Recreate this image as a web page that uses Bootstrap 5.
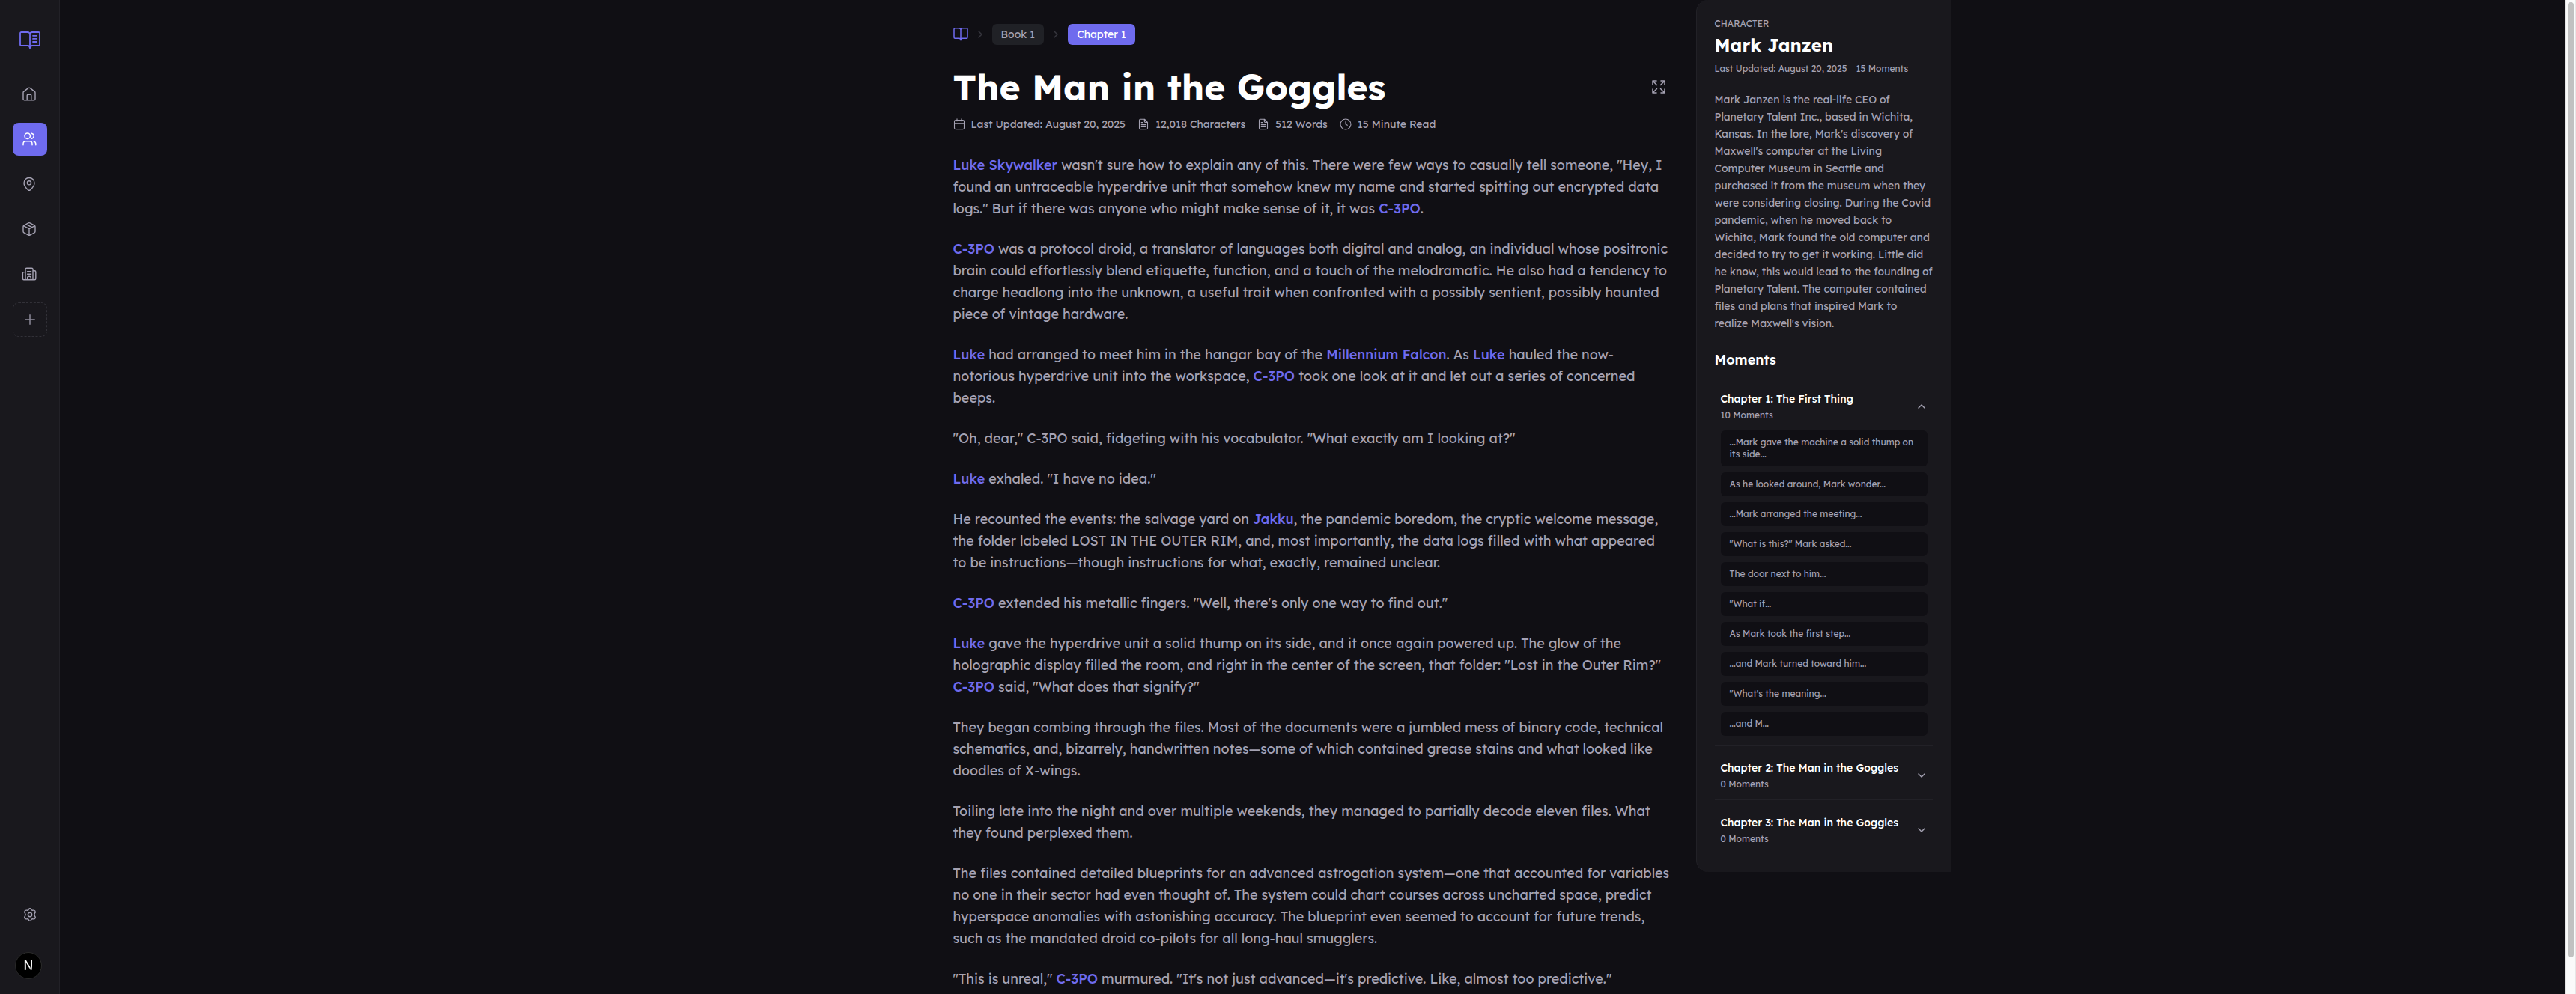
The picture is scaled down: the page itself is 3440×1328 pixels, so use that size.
<!DOCTYPE html>
<html lang="en" data-bs-theme="dark">
<head>
<meta charset="utf-8">
<meta name="viewport" content="width=device-width, initial-scale=1">
<title>The Man in the Goggles</title>
<link href="https://cdn.jsdelivr.net/npm/bootstrap@5.3.0/dist/css/bootstrap.min.css" rel="stylesheet">
<style>
:root{--page:#100f14;--panel:#19181d;--line:#222127;--soft:#a5a2b3;--brand:#6f6bee}
body{background:var(--page);color:var(--soft);font-family:Lexend,Inter,sans-serif;font-size:14px;line-height:20px}
svg{display:block;flex:none;fill:none;stroke:currentColor;stroke-linecap:round;stroke-linejoin:round}
h1,h2,h3{color:#fff}
.side{width:80px;background:var(--panel);border-right:1px solid var(--line);padding:40px 0 84px}
.side .brand-link{color:var(--brand);padding:2px 0 38px}
.side .btn{width:46px;height:44px;padding:0;color:var(--soft);border:0;border-radius:8px;--bs-btn-hover-bg:#24232a}
.side .btn.current{background:var(--brand);color:#fff}
.side .btn.adder{height:46px;border:1px dashed #323138;color:#8d8b9a}
.story-col{flex:0 1 1024px;min-width:0;padding:32px}
.wing{flex:1 1 0;min-width:0}
.crumbs .home-crumb{color:var(--brand)}
.crumbs svg.sep{color:#36353d}
.crumbs .pill{padding:4px 12px;border-radius:6px;background:#202126;color:var(--soft);text-decoration:none}
.crumbs .pill.current{background:var(--brand);color:#fff}
.story-title{font-size:48px;line-height:48px;font-weight:700}
.expand{width:36px;height:36px;padding:0;border:0;color:var(--soft)}
.story{margin-top:30px;font-size:18px;line-height:29px}
.story p{margin-bottom:25px}
.story a{color:var(--brand);font-weight:500;text-decoration:none}
.info{width:341px;background:var(--panel);border-left:1px solid var(--line);border-radius:16px 0 0 16px;padding:24px}
.tiny{font-size:12px;line-height:16px}
.stats{gap:12px}
.info h2{font-size:24px;line-height:32px;font-weight:700}
.bio{margin-top:22px;line-height:23px}
.info h3{font-size:18px;line-height:28px;font-weight:600;margin-top:23px}
.chap{padding:12px 0}
.chap+.chap{border-top:1px solid var(--line)}
.chap-toggle{border:0;background:none;padding:8px 8px 0;color:var(--soft);text-align:left}
.chap-toggle .name{color:#fff;font-weight:500}
.chap-toggle svg{transform:rotate(180deg)}
.chap-toggle.collapsed svg{transform:none}
.quote{background:var(--page);border-radius:6px;padding:8px 12px;color:var(--soft);text-decoration:none}
.track{width:15px;background:#fafafa;border:solid #e6e6e6;border-width:0 1px;padding:3px}
.thumb{width:8px;height:96.5%;border-radius:4px;background:#c1c1c1}
.dev{left:20px;bottom:20px;width:36px;height:36px;border:1px solid #2b2b2b;background:#000;padding:0}
.dev span{font:500 17px/34px Inter,sans-serif;background:linear-gradient(160deg,#fff 60%,#444 85%);-webkit-background-clip:text;background-clip:text;color:transparent}
</style>
</head>
<body>
<div class="d-flex vh-100 overflow-hidden">
  <nav class="side d-flex flex-column align-items-center flex-shrink-0" aria-label="Main">
    <a href="#" class="brand-link" aria-label="Library"><svg width="28" height="24" viewBox="0 0 28 24" stroke-width="1.8"><path d="M14 4c0-1.800-1.200-3-3-3H2.600C1.600 1 1 1.600 1 2.600v14.800c0 1 .6 1.600 1.600 1.600H11c1.700 0 3 1.200 3 3.500 0-2.300 1.300-3.500 3-3.500h8.400c1 0 1.600-.6 1.600-1.600V2.600c0-1-.6-1.600-1.600-1.600H17c-1.800 0-3 1.200-3 3v18M18 5.800h5M18 9.900h5M18 14h5"/></svg></a>
    <div class="d-flex flex-column gap-3">
      <button class="btn d-flex align-items-center justify-content-center" aria-label="Home"><svg width="20" height="20" viewBox="0 0 20 20" stroke-width="1.400"><path d="M1 7.800c0-.6.3-1.100.7-1.400l6-4.800c.8-.6 1.800-.6 2.600 0l6 4.800c.4.3.7.8.7 1.400v8.400c0 .9-.7 1.600-1.600 1.600H2.600c-.9 0-1.600-.7-1.600-1.600zM6.200 17.800v-6.200c0-.8.5-1.300 1.300-1.300h3c.8 0 1.300.5 1.300 1.300v6.200"/></svg></button>
      <button class="btn current d-flex align-items-center justify-content-center" aria-label="Characters"><svg width="20" height="20" viewBox="0 0 20 20" stroke-width="1.500"><circle cx="6.700" cy="5.700" r="3.700"/><path d="M12.300 2.200c1.800.5 3 1.800 3 3.500s-1.200 3-3 3.600M1 17.700v-1.500c0-2 1.500-3.500 3.500-3.500h5c2 0 3.500 1.500 3.500 3.500v1.500M15 12.900c1.700.5 2.800 1.700 2.800 3.300v1.500"/></svg></button>
      <button class="btn d-flex align-items-center justify-content-center" aria-label="Locations"><svg width="20" height="20" viewBox="0 0 20 20" stroke-width="1.400"><path d="M9 1.500c-4 0-7 3-7 7 0 3.800 3 7 5.700 9.400.8.600 1.800.6 2.600 0C13 15.500 16 12.300 16 8.500c0-4-3-7-7-7z"/><circle cx="9" cy="8.300" r="2.600"/></svg></button>
      <button class="btn d-flex align-items-center justify-content-center" aria-label="Items"><svg width="20" height="20" viewBox="0 0 20 20" stroke-width="1.400"><path d="M8 1.900c.7-.4 1.300-.4 2 0l6 3.200c.6.4 1 .9 1 1.600v6.600c0 .7-.4 1.200-1 1.600l-6 3.200c-.7.400-1.300.4-2 0l-6-3.200c-.6-.4-1-.9-1-1.600V6.700c0-.7.400-1.200 1-1.600zM1.400 5.700 9 9.700l7.600-4M9 9.700v8.700M4.900 3.700l7.900 4"/></svg></button>
      <button class="btn d-flex align-items-center justify-content-center" aria-label="Organizations"><svg width="20" height="20" viewBox="0 0 20 20" stroke-width="1.400"><path d="M4 17.800V4c0-1 .7-1.700 1.700-1.700h6.600c1 0 1.700.7 1.700 1.700v13.800M4 7.600H1.900C1 7.600.4 8.200.4 9.100v7.200c0 .9.6 1.500 1.500 1.500h14.400c.9 0 1.500-.6 1.500-1.500V7.200c0-.9-.6-1.500-1.500-1.500H14M6.600 6.700h5M6.600 10.200h5M6.600 17.800v-2.500c0-1.300 1-2.100 2.400-2.100s2.400.8 2.400 2.100v2.500"/></svg></button>
      <button class="btn adder d-flex align-items-center justify-content-center" aria-label="Add"><svg width="14" height="14" viewBox="0 0 14 14" stroke-width="1.500"><path d="M7 .8v12.400M.8 7h12.400"/></svg></button>
    </div>
    <button class="btn d-flex align-items-center justify-content-center mt-auto" aria-label="Settings"><svg width="20" height="20" viewBox="0 0 24 24" stroke-width="1.700"><path d="M10.300 3.200c.8-1.600 2.600-1.600 3.400 0 .5 1.300 1.700 2 3.100 1.800 1.800-.3 3 .2 3.600 1.300.7 1.200.5 2.400-.7 3.700-.9 1.200-.9 2.800 0 4 1.200 1.300 1.400 2.500.7 3.700-.6 1.100-1.800 1.600-3.600 1.300-1.400-.2-2.600.5-3.100 1.800-.8 1.600-2.600 1.600-3.400 0-.5-1.300-1.700-2-3.100-1.800-1.800.3-3-.2-3.600-1.300-.7-1.200-.5-2.400.7-3.700.9-1.200.9-2.800 0-4C3.100 8.700 2.900 7.500 3.600 6.300 4.200 5.200 5.400 4.700 7.200 5c1.400.2 2.600-.5 3.100-1.800z"/><circle cx="12" cy="12" r="3.200"/></svg></button>
  </nav>

  <main class="d-flex flex-grow-1 overflow-hidden align-items-start">
    <div class="wing"></div>
    <article class="story-col">
      <nav class="crumbs d-flex align-items-center gap-2" aria-label="Breadcrumb">
        <a href="#" class="home-crumb" aria-label="Books"><svg width="20" height="20" viewBox="0 0 20 20" stroke-width="1.500"><path d="M10 4c0-1.400-1-2.200-2.300-2.200H2.200C1.400 1.800 1 2.200 1 3v11c0 .8.400 1.200 1.200 1.200h5.500c1.300 0 2.300 1 2.300 2.600 0-1.600 1-2.600 2.300-2.600h5.500c.8 0 1.200-.4 1.200-1.200V3c0-.8-.4-1.200-1.200-1.200h-5.500C11 1.800 10 2.600 10 4v13.500"/></svg></a>
        <svg class="sep" width="16" height="16" viewBox="0 0 16 16" stroke-width="1.500"><path d="m6 4 4 4-4 4"/></svg>
        <a href="#" class="pill">Book 1</a>
        <svg class="sep" width="16" height="16" viewBox="0 0 16 16" stroke-width="1.500"><path d="m6 4 4 4-4 4"/></svg>
        <a href="#" class="pill current" aria-current="page">Chapter 1</a>
      </nav>
      <header class="d-flex justify-content-between align-items-center mt-4 pt-2 mb-3">
        <h1 class="story-title mb-0">The Man in the Goggles</h1>
        <button class="btn expand d-flex align-items-center justify-content-center" aria-label="Full screen"><svg width="20" height="20" viewBox="0 0 20 20" stroke-width="1.500"><path d="M2 7V2h5M2 2l5.500 5.500M13 2h5v5M18 2l-5.500 5.500M2 13v5h5M2 18l5.500-5.500M18 13v5h-5M18 18l-5.500-5.500"/></svg></button>
      </header>
      <div class="d-flex flex-wrap gap-3">
        <span class="d-flex align-items-center gap-2"><svg width="16" height="16" viewBox="0 0 16 16" stroke-width="1.100"><path d="M3.200 2.500h9.600c1 0 1.700.7 1.700 1.700v8.900c0 1-.7 1.700-1.700 1.700H3.200c-1 0-1.700-.7-1.700-1.700V4.200c0-1 .7-1.700 1.700-1.700zM1.500 6.700h13M5 .8v3M11 .8v3"/></svg>Last Updated: August 20, 2025</span>
        <span class="d-flex align-items-center gap-2"><svg width="16" height="16" viewBox="0 0 16 16" stroke-width="1.100"><path d="M9.500 1.200H4c-.9 0-1.500.6-1.500 1.500v10.600c0 .9.600 1.500 1.500 1.500h8c.9 0 1.500-.6 1.500-1.500v-8zM9.300 1.200v3c0 .8.400 1.200 1.200 1.200h3M5.200 5.600h1.600M5.200 8.600h5.600M5.200 11.500h5.600"/></svg>12,018 Characters</span>
        <span class="d-flex align-items-center gap-2"><svg width="16" height="16" viewBox="0 0 16 16" stroke-width="1.100"><path d="M9.500 1.200H4c-.9 0-1.500.6-1.500 1.500v10.600c0 .9.600 1.500 1.500 1.500h8c.9 0 1.500-.6 1.500-1.500v-8zM9.300 1.200v3c0 .8.400 1.200 1.200 1.200h3M5.200 5.600h1.600M5.200 8.600h5.600M5.200 11.500h5.600"/></svg>512 Words</span>
        <span class="d-flex align-items-center gap-2"><svg width="16" height="16" viewBox="0 0 16 16" stroke-width="1.100"><circle cx="8" cy="8" r="7"/><path d="M8 4.500V8l2.300 1.300"/></svg>15 Minute Read</span>
      </div>
      <div class="story">
        <p><a href="#">Luke Skywalker</a> wasn't sure how to explain any of this. There were few ways to casually tell someone, "Hey, I found an untraceable hyperdrive unit that somehow knew my name and started spitting out encrypted data logs." But if there was anyone who might make sense of it, it was <a href="#">C-3PO</a>.</p>
        <p><a href="#">C-3PO</a> was a protocol droid, a translator of languages both digital and analog, an individual whose positronic brain could effortlessly blend etiquette, function, and a touch of the melodramatic. He also had a tendency to charge headlong into the unknown, a useful trait when confronted with a possibly sentient, possibly haunted piece of vintage hardware.</p>
        <p><a href="#">Luke</a> had arranged to meet him in the hangar bay of the <a href="#">Millennium Falcon</a>. As <a href="#">Luke</a> hauled the now-notorious hyperdrive unit into the workspace, <a href="#">C-3PO</a> took one look at it and let out a series of concerned beeps.</p>
        <p>"Oh, dear," C-3PO said, fidgeting with his vocabulator. "What exactly am I looking at?"</p>
        <p><a href="#">Luke</a> exhaled. "I have no idea."</p>
        <p>He recounted the events: the salvage yard on <a href="#">Jakku</a>, the pandemic boredom, the cryptic welcome message, the folder labeled LOST IN THE OUTER RIM, and, most importantly, the data logs filled with what appeared to be instructions—though instructions for what, exactly, remained unclear.</p>
        <p><a href="#">C-3PO</a> extended his metallic fingers. "Well, there's only one way to find out."</p>
        <p><a href="#">Luke</a> gave the hyperdrive unit a solid thump on its side, and it once again powered up. The glow of the holographic display filled the room, and right in the center of the screen, that folder: "Lost in the Outer Rim?" <a href="#">C-3PO</a> said, "What does that signify?"</p>
        <p>They began combing through the files. Most of the documents were a jumbled mess of binary code, technical schematics, and, bizarrely, handwritten notes—some of which contained grease stains and what looked like doodles of X-wings.</p>
        <p>Toiling late into the night and over multiple weekends, they managed to partially decode eleven files. What they found perplexed them.</p>
        <p>The files contained detailed blueprints for an advanced astrogation system—one that accounted for variables no one in their sector had even thought of. The system could chart courses across uncharted space, predict hyperspace anomalies with astonishing accuracy. The blueprint even seemed to account for future trends, such as the mandated droid co-pilots for all long-haul smugglers.</p>
        <p>"This is unreal," <a href="#">C-3PO</a> murmured. "It's not just advanced—it's predictive. Like, almost too predictive."</p>
      </div>
    </article>
    <div class="wing">
      <aside class="info">
        <div class="tiny">CHARACTER</div>
        <h2 class="mt-1 mb-2">Mark Janzen</h2>
        <div class="tiny stats d-flex"><span>Last Updated: August 20, 2025</span><span>15 Moments</span></div>
        <p class="bio mb-0">Mark Janzen is the real-life CEO of Planetary Talent Inc., based in Wichita, Kansas. In the lore, Mark's discovery of Maxwell's computer at the Living Computer Museum in Seattle and purchased it from the museum when they were considering closing. During the Covid pandemic, when he moved back to Wichita, Mark found the old computer and decided to try to get it working. Little did he know, this would lead to the founding of Planetary Talent. The computer contained files and plans that inspired Mark to realize Maxwell's vision.</p>
        <h3 class="mb-2">Moments</h3>
        <section class="chap">
          <button class="chap-toggle w-100 d-flex justify-content-between align-items-center" data-bs-toggle="collapse" data-bs-target="#ch1" aria-expanded="true">
            <span class="d-flex flex-column gap-1"><span class="name">Chapter 1: The First Thing</span><span class="tiny">10 Moments</span></span>
            <svg width="16" height="16" viewBox="0 0 16 16" stroke-width="1.500"><path d="m4 6 4 4 4-4"/></svg>
          </button>
          <div class="collapse show" id="ch1">
            <div class="d-flex flex-column gap-2 px-2 tiny mt-2 pt-1">
              <a href="#" class="quote">...Mark gave the machine a solid thump on its side...</a>
              <a href="#" class="quote">As he looked around, Mark wonder...</a>
              <a href="#" class="quote">...Mark arranged the meeting...</a>
              <a href="#" class="quote">"What is this?" Mark asked...</a>
              <a href="#" class="quote">The door next to him...</a>
              <a href="#" class="quote">"What if...</a>
              <a href="#" class="quote">As Mark took the first step...</a>
              <a href="#" class="quote">...and Mark turned toward him...</a>
              <a href="#" class="quote">"What's the meaning...</a>
              <a href="#" class="quote">...and M...</a>
            </div>
          </div>
        </section>
        <section class="chap">
          <button class="chap-toggle collapsed w-100 d-flex justify-content-between align-items-center" data-bs-toggle="collapse" data-bs-target="#ch2" aria-expanded="false">
            <span class="d-flex flex-column gap-1"><span class="name">Chapter 2: The Man in the Goggles</span><span class="tiny">0 Moments</span></span>
            <svg width="16" height="16" viewBox="0 0 16 16" stroke-width="1.500"><path d="m4 6 4 4 4-4"/></svg>
          </button>
          <div class="collapse" id="ch2"></div>
        </section>
        <section class="chap">
          <button class="chap-toggle collapsed w-100 d-flex justify-content-between align-items-center" data-bs-toggle="collapse" data-bs-target="#ch3" aria-expanded="false">
            <span class="d-flex flex-column gap-1"><span class="name">Chapter 3: The Man in the Goggles</span><span class="tiny">0 Moments</span></span>
            <svg width="16" height="16" viewBox="0 0 16 16" stroke-width="1.500"><path d="m4 6 4 4 4-4"/></svg>
          </button>
          <div class="collapse" id="ch3"></div>
        </section>
      </aside>
    </div>
  </main>
  <div class="track flex-shrink-0" aria-hidden="true"><div class="thumb"></div></div>
</div>
<button class="dev position-fixed rounded-circle" aria-label="Developer tools"><span>N</span></button>
<script src="https://cdn.jsdelivr.net/npm/bootstrap@5.3.0/dist/js/bootstrap.bundle.min.js"></script>
</body>
</html>
